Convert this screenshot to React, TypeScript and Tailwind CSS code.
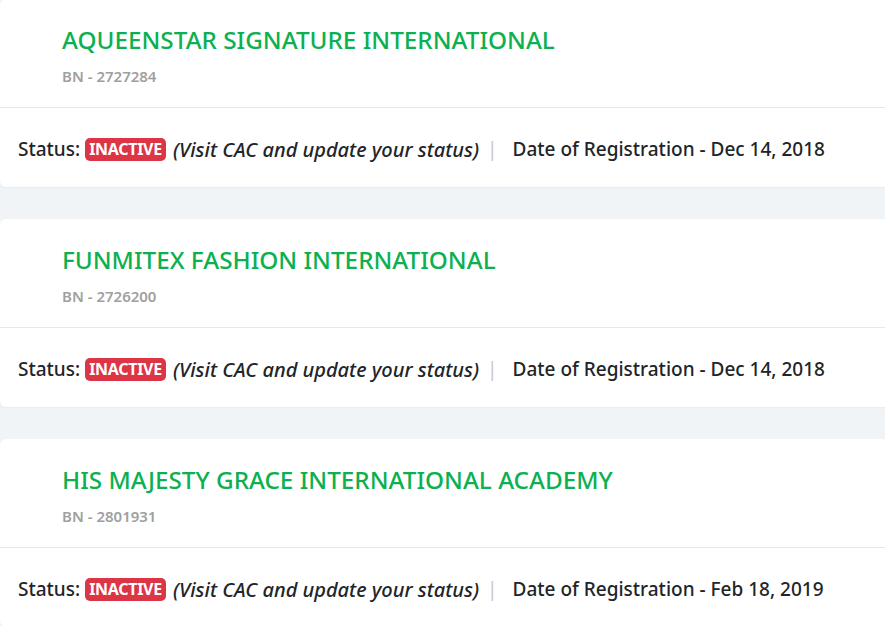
import React from 'react';

type Business = {
  name: string;
  bn: string;
  status: string;
  registered: string;
};

const businesses: Business[] = [
  { name: 'AQUEENSTAR SIGNATURE INTERNATIONAL', bn: '2727284', status: 'INACTIVE', registered: 'Dec 14, 2018' },
  { name: 'FUNMITEX FASHION INTERNATIONAL', bn: '2726200', status: 'INACTIVE', registered: 'Dec 14, 2018' },
  { name: 'HIS MAJESTY GRACE INTERNATIONAL ACADEMY', bn: '2801931', status: 'INACTIVE', registered: 'Feb 18, 2019' },
];

const BusinessCard: React.FC<{ item: Business }> = ({ item }) => (
  <div className="bg-white rounded-md shadow-[0_1px_2px_rgba(0,0,0,0.04)] mr-[-8px]">
    <div className="h-[109px] pl-[62px] pt-[25px] border-b border-[#e6e8ea]">
      <h2 className="text-[24.3px] leading-[32px] font-medium text-[#0cb050]">{item.name}</h2>
      <p className="mt-[10px] text-[15px] leading-[20px] font-semibold text-[#a0a0a0]">BN - {item.bn}</p>
    </div>
    <div className="h-[79px] pt-[4px] px-[18px] flex items-center text-[19px] text-[#212529]">
      <span className="font-medium">Status:</span>
      <span className="ml-[5px] bg-[#dc3545] text-white text-[16px] tracking-[-0.3px] font-bold leading-[23px] px-[4px] rounded-[5px]">
        {item.status}
      </span>
      <span className="ml-[7px] italic font-medium text-[20px]">(Visit CAC and update your status)</span>
      <span className="ml-[8px] text-[#c8c8c8]">|</span>
      <span className="ml-[15px] font-medium">Date of Registration - {item.registered}</span>
    </div>
  </div>
);

export default function App() {
  return (
    <div
      className="min-h-screen bg-[#f0f4f6] overflow-hidden flex flex-col gap-8"
      style={{ fontFamily: '"Noto Sans", "Open Sans", sans-serif' }}
    >
      <div className="flex flex-col gap-8 mt-[-1px]">
        {businesses.map((b) => (
          <BusinessCard key={b.bn} item={b} />
        ))}
      </div>
    </div>
  );
}
